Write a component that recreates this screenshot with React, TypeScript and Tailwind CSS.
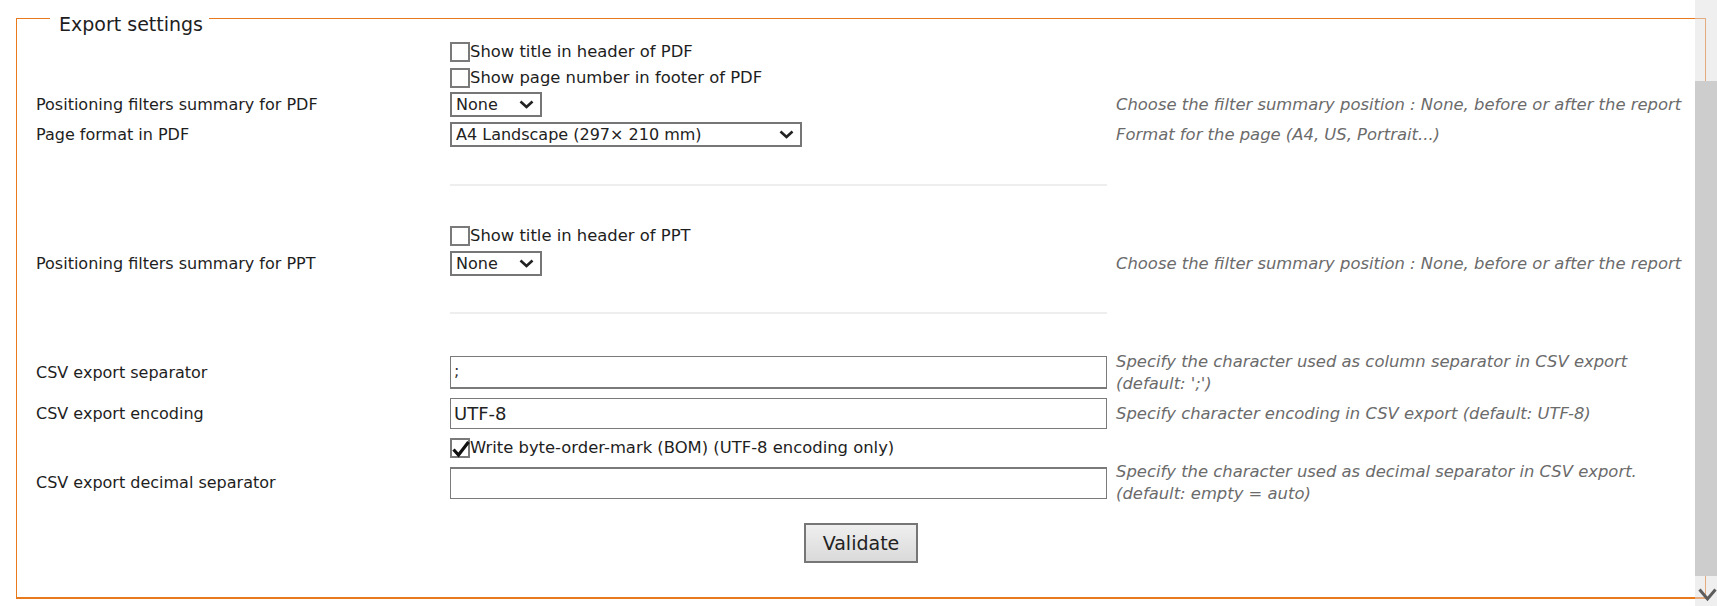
export default function App() {
  const row = "grid grid-cols-[414px_666px_1fr] items-center pl-[19px]";
  const help = "italic text-[16.4px] text-[#6b6b6b] leading-[22px]";
  const check = "flex items-center text-[16.4px] leading-[20px]";

  const Checkbox = ({ checked = false }: { checked?: boolean }) => (
    <span className="relative inline-block h-[20px] w-[20px] shrink-0 border-2 border-[#7a7a7a] bg-white">
      {checked && (
        <svg className="absolute left-[-1px] top-[-1px]" width="20" height="20" viewBox="0 0 20 20">
          <path d="M2.5 10.5 L7.5 16 L17.5 3" fill="none" stroke="#111" strokeWidth="3.2" strokeLinejoin="miter" />
        </svg>
      )}
    </span>
  );

  const Select = ({ value, width }: { value: string; width: string }) => (
    <div className={`flex h-[25px] items-center justify-between border-2 border-[#767676] bg-white pl-[4px] pr-[6px] leading-none text-[#222] ${width}`}>
      <span>{value}</span>
      <svg width="15" height="9" viewBox="0 0 15 9">
        <path d="M1.5 1.5 L7.5 7 L13.5 1.5" fill="none" stroke="#222" strokeWidth="2.6" />
      </svg>
    </div>
  );

  return (
    <div className="relative h-[606px] w-full overflow-hidden bg-white font-['DejaVu_Sans',Verdana,sans-serif] text-[16px] text-[#1e1e1e]">
      <div className="relative ml-[16px] mt-[18px] h-[581px] w-[1690px] border border-b-2 border-[#e8791c] pt-[23px]">
        {/* legend */}
        <span className="absolute left-[33px] top-[-7px] bg-white pl-[9px] pr-[6px] text-[19px] leading-[24px]">
          Export settings
        </span>

        {/* PDF */}
        <div className={`${row} h-[20px]`}>
          <span />
          <label className={check}>
            <Checkbox />
            Show title in header of PDF
          </label>
          <span />
        </div>
        <div className={`${row} mt-[6px] h-[20px]`}>
          <span />
          <label className={check}>
            <Checkbox />
            Show page number in footer of PDF
          </label>
          <span />
        </div>
        <div className={`${row} mt-[4px] h-[25px]`}>
          <span>Positioning filters summary for PDF</span>
          <Select value="None" width="w-[92px]" />
          <span className={help}>Choose the filter summary position : None, before or after the report</span>
        </div>
        <div className={`${row} mt-[5px] h-[25px]`}>
          <span>Page format in PDF</span>
          <Select value="A4 Landscape (297× 210 mm)" width="w-[352px]" />
          <span className={help}>Format for the page (A4, US, Portrait...)</span>
        </div>
        <div className={`${row} mt-[37px]`}>
          <span />
          <div className="h-[2px] w-[657px] bg-[#eeeeee]" />
          <span />
        </div>

        {/* PPT */}
        <div className={`${row} mt-[40px] h-[20px]`}>
          <span />
          <label className={check}>
            <Checkbox />
            Show title in header of PPT
          </label>
          <span />
        </div>
        <div className={`${row} mt-[5px] h-[25px]`}>
          <span>Positioning filters summary for PPT</span>
          <Select value="None" width="w-[92px]" />
          <span className={help}>Choose the filter summary position : None, before or after the report</span>
        </div>
        <div className={`${row} mt-[36px]`}>
          <span />
          <div className="h-[2px] w-[657px] bg-[#eeeeee]" />
          <span />
        </div>

        {/* CSV */}
        <div className={`${row} mt-[42px] h-[33px]`}>
          <span>CSV export separator</span>
          <div className="flex h-[33px] w-[657px] items-end border border-b-2 border-[#7a7a7a] px-[3px] pb-[4px] text-[#333]">;</div>
          <span className={`${help} -my-[6px]`}>
            Specify the character used as column separator in CSV export
            <br />
            (default: ';')
          </span>
        </div>
        <div className={`${row} mt-[9px] h-[31px]`}>
          <span>CSV export encoding</span>
          <div className="flex h-[31px] w-[657px] items-center border border-[#7a7a7a] px-[3px] text-[18px] text-[#222]">UTF-8</div>
          <span className={help}>Specify character encoding in CSV export (default: UTF-8)</span>
        </div>
        <div className={`${row} mt-[9px] h-[20px]`}>
          <span />
          <label className={check}>
            <Checkbox checked />
            Write byte-order-mark (BOM) (UTF-8 encoding only)
          </label>
          <span />
        </div>
        <div className={`${row} mt-[9px] h-[32px]`}>
          <span>CSV export decimal separator</span>
          <div className="h-[32px] w-[657px] border border-t-2 border-[#7a7a7a]" />
          <span className={`${help} -my-[6px]`}>
            Specify the character used as decimal separator in CSV export.
            <br />
            (default: empty = auto)
          </span>
        </div>

        <div className="mt-[24px] flex justify-center">
          <button className="h-[40px] w-[114px] border-2 border-[#767676] bg-gradient-to-b from-[#efefef] to-[#dadada] text-[19px] text-[#222]">
            Validate
          </button>
        </div>
      </div>

      {/* scrollbar */}
      <div className="absolute right-0 top-0 h-full w-[22px] bg-[#e0e0e0]/50">
        <div className="absolute left-0 top-[81px] h-[495px] w-full bg-[#cdcdcd]" />
        <svg className="absolute left-[3px] top-[587px]" width="19" height="16" viewBox="0 0 19 16">
          <path d="M1.5 2.5 L9.5 12 L17.5 2.5" fill="none" stroke="#5c5c5c" strokeWidth="3" />
        </svg>
      </div>
    </div>
  );
}
